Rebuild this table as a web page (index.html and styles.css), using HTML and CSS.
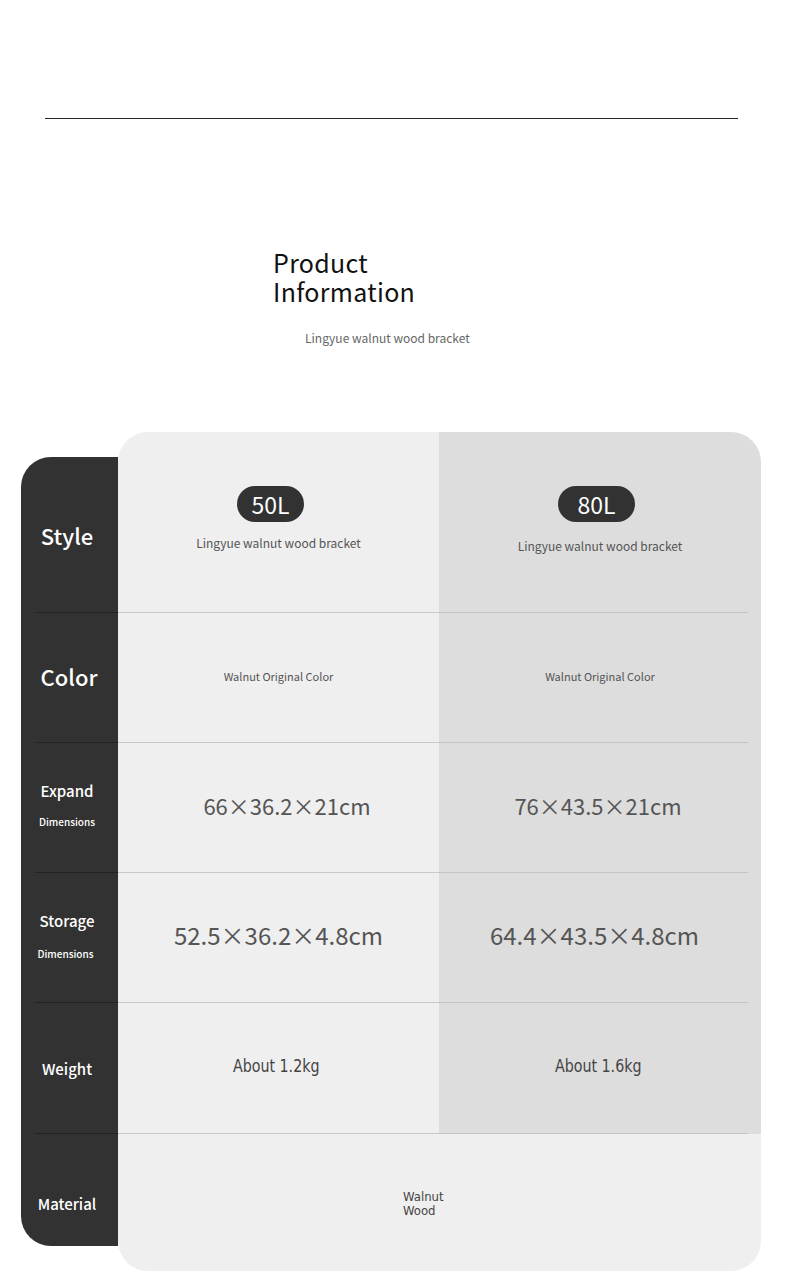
FILE: index.html
```html
<!DOCTYPE html>
<html lang="en">
<head>
<meta charset="utf-8">
<title>Product Information</title>
<link rel="stylesheet" href="styles.css">
</head>
<body>
<div class="page">
  <div class="rule"></div>
  <header class="intro">
    <h1 class="title"><span class="title-line">Product</span><span class="title-line">Information</span></h1>
    <p class="subtitle">Lingyue walnut wood bracket</p>
  </header>

  <section class="spec">
    <div class="label label-first"><span class="label-big">Style</span></div>
    <div class="cell c1 c1-first style-cell">
      <span class="pill pill-50">50L</span>
      <span class="model">Lingyue walnut wood bracket</span>
    </div>
    <div class="cell c2 c2-first style-cell">
      <span class="pill pill-80">80L</span>
      <span class="model model-2">Lingyue walnut wood bracket</span>
    </div>

    <div class="label"><span class="label-big label-color">Color</span></div>
    <div class="cell c1"><span class="small">Walnut Original Color</span></div>
    <div class="cell c2"><span class="small">Walnut Original Color</span></div>

    <div class="label label-stack"><span class="label-mid">Expand</span><span class="label-tiny">Dimensions</span></div>
    <div class="cell c1"><span class="dim dim-e1">66×36.2×21cm</span></div>
    <div class="cell c2"><span class="dim dim-e2">76×43.5×21cm</span></div>

    <div class="label label-stack label-stack-2"><span class="label-mid">Storage</span><span class="label-tiny">Dimensions</span></div>
    <div class="cell c1"><span class="dim dim-big">52.5×36.2×4.8cm</span></div>
    <div class="cell c2"><span class="dim dim-big dim-s2">64.4×43.5×4.8cm</span></div>

    <div class="label"><span class="label-mid">Weight</span></div>
    <div class="cell c1"><span class="weight">About 1.2kg</span></div>
    <div class="cell c2"><span class="weight">About 1.6kg</span></div>

    <div class="label label-last"><span class="label-mid">Material</span></div>
    <div class="cell material"><span class="material-text">Walnut<br>Wood</span></div>
  </section>
</div>
</body>
</html>
```
FILE: styles.css
```css
* { box-sizing: border-box; }
html, body { margin: 0; padding: 0; background: #ffffff; }
body {
  font-family: "Noto Sans CJK SC", "Noto Sans", sans-serif;
  color: #333;
}
.page {
  width: 790px;
  height: 1277px;
  overflow: hidden;
  padding-top: 118px;
}
.rule {
  margin-left: 45px;
  width: 693px;
  height: 1px;
  background: #222;
}
.intro {
  padding-left: 273px;
  padding-top: 129px;
  height: 313px;
}
.title {
  margin: 0;
  font-size: 25px;
  font-weight: 400;
  color: #111;
  letter-spacing: 0.3px;
}
.title-line {
  display: block;
  height: 29px;
  line-height: 29px;
  overflow: visible;
}
.subtitle {
  margin: 24px 0 0 32px;
  font-size: 12px;
  line-height: 16px;
  color: #666;
}

.spec {
  margin-left: 21px;
  width: 740px;
  display: grid;
  grid-template-columns: 97px 321px 322px;
  grid-template-rows: 181px 130px 130px 130px 131px 137px;
}
.label {
  background: linear-gradient(#222, #222) no-repeat 14px 100% / calc(100% - 14px) 1px, #323232;
  color: #fff;
  display: flex;
  flex-direction: column;
  align-items: center;
  justify-content: center;
  padding-right: 5px;
}
.label-first {
  margin-top: 25px;
  border-top-left-radius: 30px;
}
.label-last {
  margin-bottom: 25px;
  border-bottom-left-radius: 30px;
  background: #323232;
  padding-top: 28px;
}
.label-big {
  font-size: 22px;
  line-height: 28px;
  font-weight: 500;
}
.label-color {
  margin-top: -5px;
  margin-left: 4px;
}
.label-mid {
  font-size: 15px;
  line-height: 20px;
  font-weight: 500;
}
.label-tiny {
  font-size: 10px;
  line-height: 14px;
  font-weight: 500;
  margin-top: 14px;
}
.label-stack { padding-bottom: 7px; }
.label-stack-2 { padding-bottom: 5px; }
.label-stack-2 .label-tiny { margin-top: 16px; margin-right: 3px; }

.cell {
  display: flex;
  flex-direction: column;
  align-items: center;
  justify-content: center;
}
.c1 {
  background: #efefef;
  border-bottom: 1px solid #c9c9c9;
}
.c2 {
  background: linear-gradient(#c4c4c4, #c4c4c4) no-repeat 0 100% / calc(100% - 13px) 1px, #dddddd;
}
.c1-first { border-top-left-radius: 30px; }
.c2-first { border-top-right-radius: 30px; }
.style-cell {
  justify-content: flex-start;
  padding-top: 54px;
}
.pill {
  height: 36px;
  border-radius: 18px;
  background: #323232;
  color: #fff;
  font-size: 23px;
  line-height: 36px;
  padding: 0 14px;
}
.pill-50 { margin-right: 16px; }
.pill-80 { padding: 0 19px; margin-right: 7px; }
.model {
  margin-top: 13px;
  font-size: 12px;
  line-height: 16px;
  color: #555;
}
.model-2 { margin-top: 16px; }
.small {
  font-size: 11px;
  line-height: 14px;
  color: #555;
  margin-top: -4px;
}
.dim {
  font-size: 22px;
  line-height: 28px;
  color: #555;
  margin-top: -6px;
}
.dim-big { font-size: 24px; }
.dim-e1 { margin-left: 17px; }
.dim-e2 { margin-right: 4px; }
.dim-s2 { margin-right: 11px; }
.weight {
  display: inline-block;
  font-family: "DejaVu Sans Condensed", "DejaVu Sans", sans-serif;
  font-size: 18px;
  line-height: 22px;
  color: #444;
  margin-top: -5px;
  margin-right: 4px;
  transform: scaleX(0.88);
}
.material {
  grid-column: 2 / 4;
  background: #efefef;
  border-bottom-left-radius: 30px;
  border-bottom-right-radius: 30px;
  align-items: flex-start;
  padding-left: 285px;
}
.material-text {
  font-family: "Liberation Sans Narrow", "DejaVu Sans Condensed", "Noto Sans", sans-serif;
  font-size: 13px;
  line-height: 14px;
  color: #444;
  margin-top: 2px;
}
```
